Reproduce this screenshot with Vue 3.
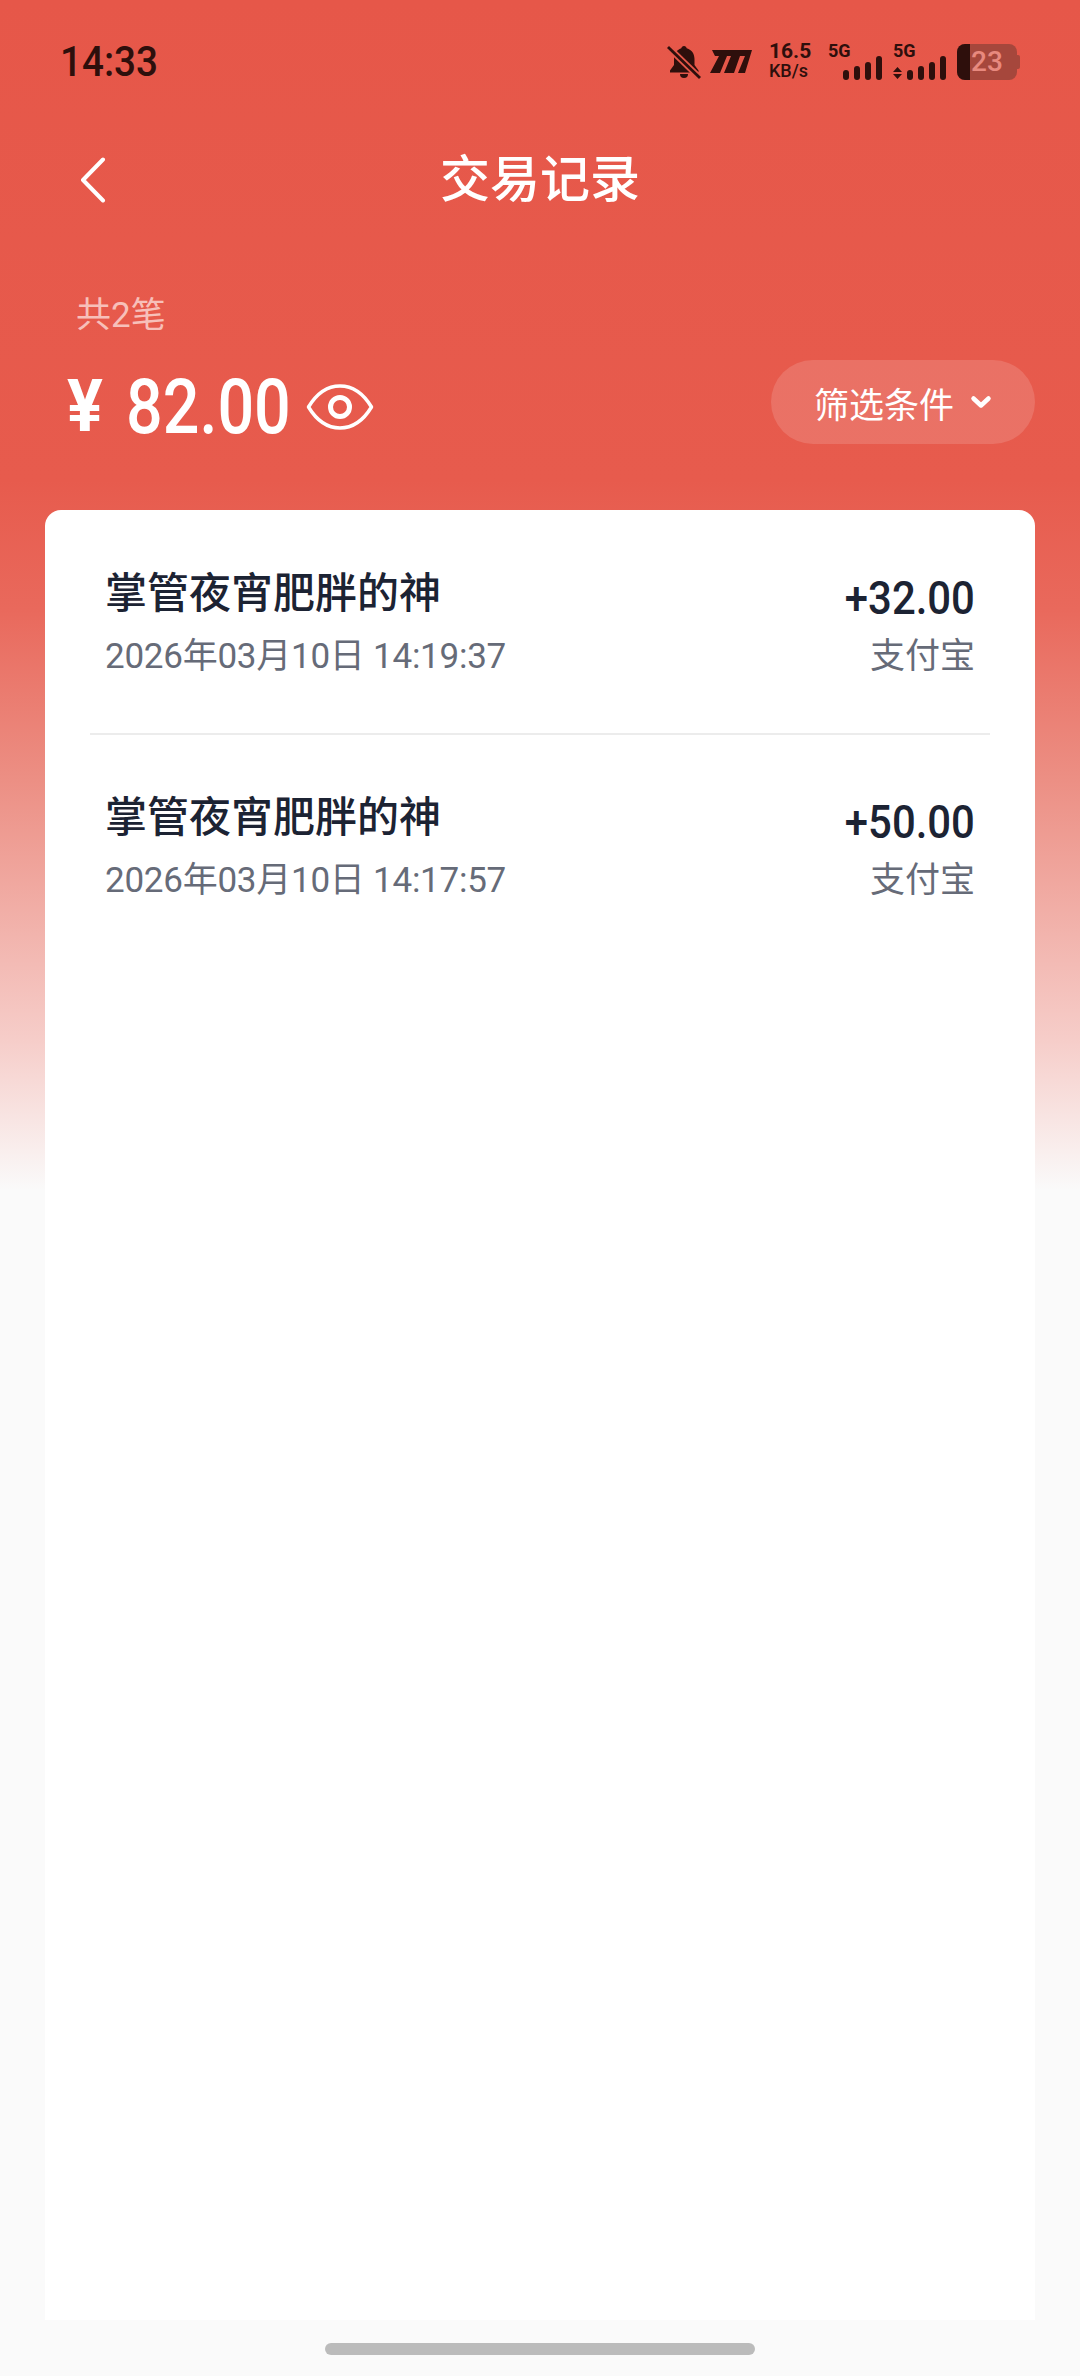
<template>
  <div class="page">
    <div class="status-bar">
      <span class="clock">14:33</span>
      <div class="status-icons">
        <svg class="bell" width="34" height="36" viewBox="0 0 34 36">
          <path d="M17 2c1.500 0 2.500 1 2.700 2.300C25 6 27.500 10 27.500 15v6l4 5.500v2H3v-2l4-5.500v-6C7 10 9.500 6 14.300 4.300 14.500 3 15.500 2 17 2z" fill="#2e0f0c" />
          <path d="M13 30h8a4 4 0 0 1-8 0z" fill="#2e0f0c" />
          <path d="M1 3l32 31" stroke="#e65749" stroke-width="6.500" />
          <path d="M1 3l32 31" stroke="#2e0f0c" stroke-width="2.800" />
        </svg>
        <svg class="logo-m" width="42" height="25" viewBox="0 0 42 25">
          <path d="M2 1H42L35 24H28L35 7H30L24 24H14L21 7H17L10 24H0L9 7H5z" fill="#2e0f0c" />
        </svg>
        <div class="speed">
          <span class="speed-value">16.5</span>
          <span class="speed-unit">KB/s</span>
        </div>
        <div class="signal">
          <span class="net">5G</span>
          <div class="bars">
            <i v-for="h in barHeights" :key="h" :style="{ height: h + 'px' }"></i>
          </div>
        </div>
        <div class="signal second">
          <span class="net">5G</span>
          <div class="bars">
            <svg class="updown" width="9" height="12" viewBox="0 0 9 12">
              <path d="M4.500 0L9 5H0zM4.500 12L0 7h9z" fill="#2e0f0c" />
            </svg>
            <i v-for="h in barHeights" :key="h" :style="{ height: h + 'px' }"></i>
          </div>
        </div>
        <div class="battery">
          <div class="battery-level"></div>
          <span class="battery-text">23</span>
          <div class="battery-tip"></div>
        </div>
      </div>
    </div>

    <header class="nav">
      <svg class="back" width="26" height="46" viewBox="0 0 26 46">
        <path d="M23 2.500L3 23l20 20.500" fill="none" stroke="#fff" stroke-width="4" stroke-linecap="round" stroke-linejoin="round" />
      </svg>
      <h1 class="title">交易记录</h1>
    </header>

    <section class="summary">
      <div class="count">共2笔</div>
      <div class="summary-row">
        <div class="total">
          <span class="yen">¥</span>
          <span class="amount">82.00</span>
          <svg class="eye" width="68" height="50" viewBox="0 0 68 50">
            <path d="M2.500 25C11 11 22 4 34 4s23 7 31.500 21C57 39 46 46 34 46S11 39 2.500 25z" fill="none" stroke="#fff" stroke-width="3.500" stroke-linejoin="round" />
            <circle cx="34" cy="25" r="9.500" fill="none" stroke="#fff" stroke-width="5" />
          </svg>
        </div>
        <button class="filter">
          <span>筛选条件</span>
          <svg width="22" height="14" viewBox="0 0 22 14">
            <path d="M3.500 3.500L11 10.500l7.500-7" fill="none" stroke="#fff" stroke-width="4.500" stroke-linecap="round" stroke-linejoin="round" />
          </svg>
        </button>
      </div>
    </section>

    <main class="card">
      <div v-for="(item, i) in records" :key="i" class="record-wrap">
        <div class="record">
          <div class="record-left">
            <div class="name">{{ item.name }}</div>
            <div class="time">{{ item.time }}</div>
          </div>
          <div class="record-right">
            <div class="money">{{ item.money }}</div>
            <div class="channel">{{ item.channel }}</div>
          </div>
        </div>
        <div v-if="i < records.length - 1" class="divider"></div>
      </div>
    </main>

    <div class="home-area">
      <div class="home-bar"></div>
    </div>
  </div>
</template>

<script setup>
const barHeights = [10, 14, 18, 24]

const records = [
  { name: '掌管夜宵肥胖的神', time: '2026年03月10日 14:19:37', money: '+32.00', channel: '支付宝' },
  { name: '掌管夜宵肥胖的神', time: '2026年03月10日 14:17:57', money: '+50.00', channel: '支付宝' }
]
</script>

<style>
body {
  margin: 0;
  background: #fafafa;
}
</style>

<style scoped>
* {
  box-sizing: border-box;
}

.page {
  width: 1080px;
  height: 2376px;
  display: flex;
  flex-direction: column;
  overflow: hidden;
  font-family: Roboto, "Noto Sans CJK SC", sans-serif;
  background: linear-gradient(
    180deg,
    #e65749 0,
    #e75b4d 480px,
    #e9695c 610px,
    #ec8f84 780px,
    #f6cdc9 1040px,
    #fafafa 1190px
  );
}

/* status bar */
.status-bar {
  height: 122px;
  padding: 0 63px 0 60px;
  display: flex;
  align-items: center;
  justify-content: space-between;
  color: #2e0f0c;
}

.clock {
  display: inline-block;
  font-size: 42px;
  font-weight: 500;
  transform: scaleX(0.92);
  transform-origin: left center;
}

.status-icons {
  display: flex;
  align-items: flex-end;
  height: 38px;
}

.logo-m {
  margin-left: 9px;
  margin-bottom: 6px;
}

.speed {
  margin-left: 17px;
  width: 48px;
  display: flex;
  flex-direction: column;
  font-weight: 500;
  line-height: 19px;
}

.speed-value {
  font-size: 21px;
  font-weight: 700;
}

.speed-unit {
  font-size: 18px;
}

.signal {
  position: relative;
  margin-left: 11px;
  width: 54px;
  height: 38px;
}

.signal.second {
  width: 53px;
}

.net {
  position: absolute;
  left: 0;
  top: 0;
  font-size: 18px;
  line-height: 18px;
  font-weight: 700;
}

.bars {
  position: absolute;
  right: 0;
  bottom: 0;
  display: flex;
  align-items: flex-end;
  gap: 5px;
}

.bars i {
  display: block;
  width: 6px;
  border-radius: 3px;
  background: #2e0f0c;
}

.updown {
  margin-bottom: 1px;
}

.battery {
  position: relative;
  margin-left: 11px;
  width: 60px;
  height: 36px;
  border-radius: 8px;
  background: #a6473c;
}

.battery-level {
  position: absolute;
  left: 0;
  top: 0;
  bottom: 0;
  width: 13px;
  border-radius: 8px 0 0 8px;
  background: #2e0f0c;
}

.battery-text {
  position: absolute;
  left: 14px;
  top: 0;
  line-height: 36px;
  font-size: 28px;
  font-weight: 500;
  color: #e8897e;
}

.battery-tip {
  position: absolute;
  right: -3px;
  top: 11px;
  width: 3px;
  height: 14px;
  border-radius: 0 2px 2px 0;
  background: #a6473c;
}

/* nav */
.nav {
  position: relative;
  height: 116px;
  display: flex;
  align-items: center;
  justify-content: center;
}

.back {
  position: absolute;
  left: 80px;
  top: 35px;
}

.title {
  margin: 0;
  font-size: 50px;
  font-weight: 500;
  line-height: 116px;
  color: #fff;
}

/* summary */
.summary {
  padding: 56px 45px 0 67px;
  height: 272px;
}

.count {
  margin-left: 9px;
  font-size: 35px;
  line-height: 44px;
  color: #f7c0ba;
}

.summary-row {
  margin-top: 17px;
  display: flex;
  align-items: center;
  justify-content: space-between;
}

.total {
  display: flex;
  align-items: center;
  color: #fff;
  padding-top: 10px;
}

.yen {
  display: inline-block;
  width: 37px;
  font-size: 72px;
  font-weight: 700;
  line-height: 84px;
  transform: scaleX(0.93);
  transform-origin: left center;
}

.amount {
  display: inline-block;
  width: 161px;
  margin-left: 22px;
  font-size: 76px;
  font-weight: 500;
  line-height: 84px;
  white-space: nowrap;
  transform: scaleX(0.85);
  transform-origin: left center;
}

.eye {
  margin-left: 19px;
}

.filter {
  width: 264px;
  height: 84px;
  display: flex;
  align-items: center;
  justify-content: center;
  gap: 16px;
  border: 0;
  border-radius: 42px;
  background: rgba(255, 255, 255, 0.14);
  color: #fff;
  font-family: inherit;
  font-size: 35px;
}

/* list */
.card {
  flex: none;
  margin: 0 45px;
  height: 1810px;
  border-radius: 16px 16px 0 0;
  background: #fff;
}

.record {
  height: 223px;
  padding: 56px 60px 0;
  display: flex;
  justify-content: space-between;
}

.record-wrap:nth-child(2) .record {
  padding-top: 55px;
}

.name {
  font-size: 42px;
  font-weight: 500;
  line-height: 56px;
  color: #1c2333;
}

.time {
  margin-top: 11px;
  font-size: 35px;
  line-height: 48px;
  letter-spacing: -0.25px;
  color: #666b78;
}

.record-right {
  text-align: right;
}

.money {
  font-size: 46px;
  line-height: 56px;
  font-weight: 500;
  color: #1c2333;
  white-space: nowrap;
  transform: scaleX(0.91);
  transform-origin: right center;
  padding-top: 4px;
}

.channel {
  margin-top: 7px;
  font-size: 35px;
  line-height: 48px;
  color: #666b78;
}

.divider {
  height: 2px;
  margin: 0 45px;
  background: #ececec;
}

/* home indicator */
.home-area {
  flex: 1;
  display: flex;
  justify-content: center;
  padding-top: 23px;
}

.home-bar {
  width: 430px;
  height: 12px;
  border-radius: 6px;
  background: #bbbbbb;
}
</style>
